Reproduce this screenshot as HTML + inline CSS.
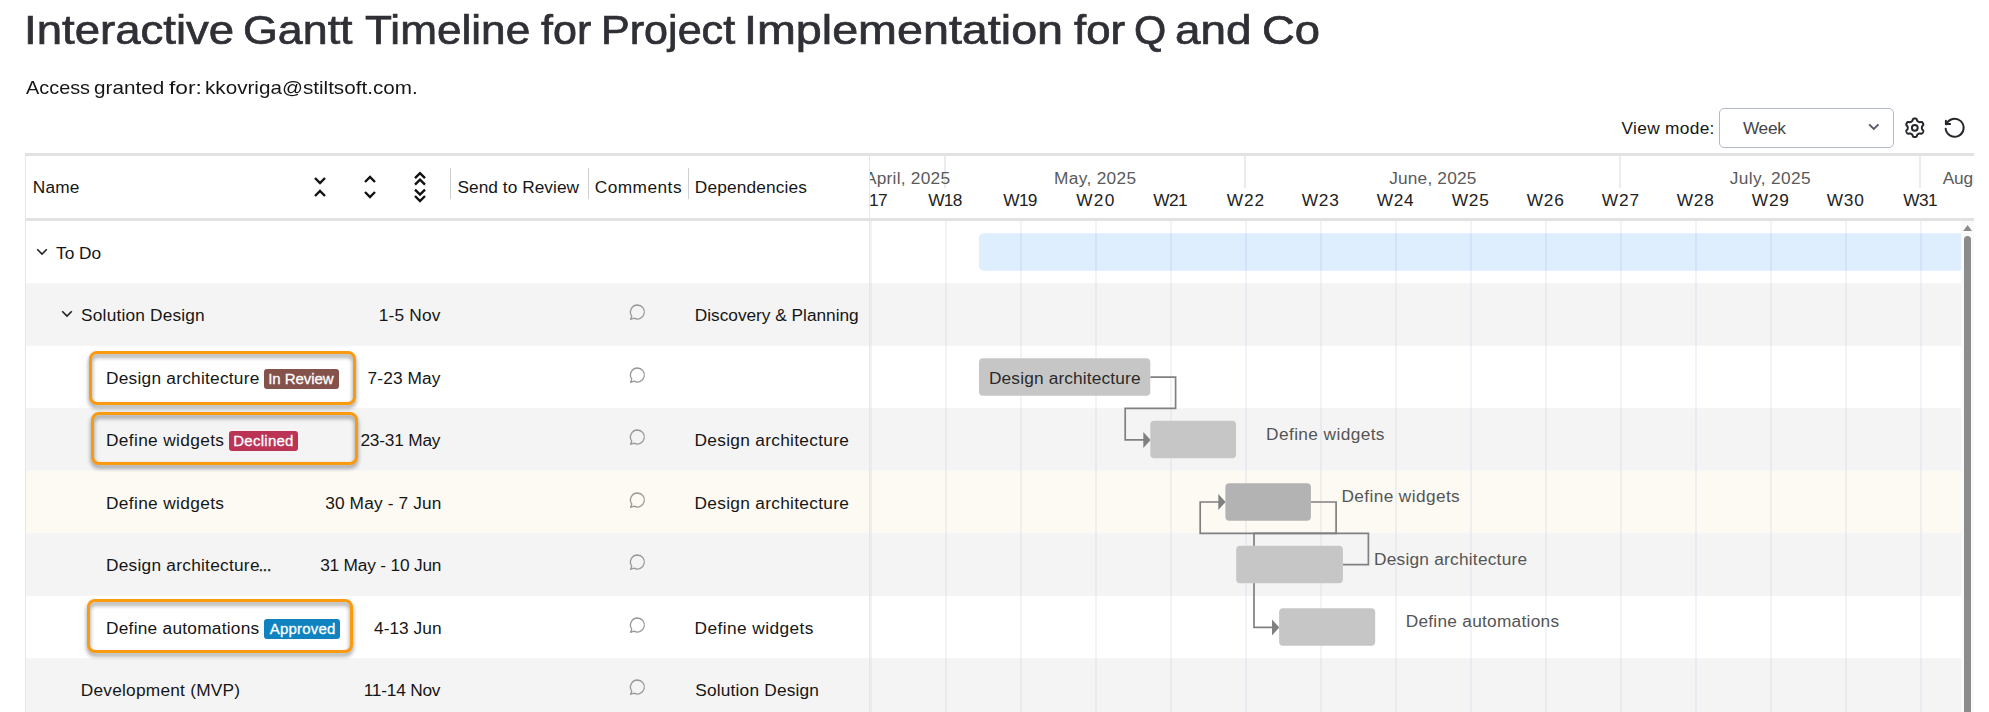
<!DOCTYPE html>
<html lang="en"><head><meta charset="utf-8">
<title>Interactive Gantt Timeline for Project Implementation for Q and Co</title>
<style>
*{box-sizing:border-box;margin:0;padding:0}
html,body{width:1989px;height:712px;overflow:hidden;background:#fff}
body{position:relative;font-family:"Liberation Sans",sans-serif;color:#1c1c1c}
.t{position:absolute;white-space:pre;display:block}
.abs{position:absolute}
.row{position:absolute;left:26px;width:1935px}
.gl{position:absolute;top:221px;width:2px;height:491px;background:rgba(200,212,225,.28)}
.bar{position:absolute;height:37px;border-radius:4px;background:#c6c6c6}
.hl{position:absolute;border:3px solid #fa9a0f;border-radius:8px;filter:drop-shadow(0 3.4px 2.1px rgba(0,0,0,.46))}
.badge{position:absolute;height:19.5px;border-radius:3px}
svg{position:absolute;overflow:visible}
</style></head><body>

<h1 style="font-weight:400"><span class="t" style="left:23.79px;top:4.93px;font-size:40.6px;line-height:50px;color:#2f3036;transform:scaleX(1.1225);transform-origin:0 0;-webkit-text-stroke:0.7px #2f3036;">Interactive</span> <span class="t" style="left:243.13px;top:4.93px;font-size:40.6px;line-height:50px;color:#2f3036;transform:scaleX(1.1038);transform-origin:0 0;-webkit-text-stroke:0.7px #2f3036;">Gantt</span> <span class="t" style="left:364.79px;top:4.93px;font-size:40.6px;line-height:50px;color:#2f3036;transform:scaleX(1.0880);transform-origin:0 0;-webkit-text-stroke:0.7px #2f3036;">Timeline</span> <span class="t" style="left:540.86px;top:4.93px;font-size:40.6px;line-height:50px;color:#2f3036;transform:scaleX(1.0612);transform-origin:0 0;-webkit-text-stroke:0.7px #2f3036;">for</span> <span class="t" style="left:601.03px;top:4.93px;font-size:40.6px;line-height:50px;color:#2f3036;transform:scaleX(1.0621);transform-origin:0 0;-webkit-text-stroke:0.7px #2f3036;">Project</span> <span class="t" style="left:744.39px;top:4.93px;font-size:40.6px;line-height:50px;color:#2f3036;transform:scaleX(1.1500);transform-origin:0 0;-webkit-text-stroke:0.7px #2f3036;">Implementation</span> <span class="t" style="left:1073.96px;top:4.93px;font-size:40.6px;line-height:50px;color:#2f3036;transform:scaleX(1.0783);transform-origin:0 0;-webkit-text-stroke:0.7px #2f3036;">for</span> <span class="t" style="left:1134.39px;top:4.93px;font-size:40.6px;line-height:50px;color:#2f3036;transform:scaleX(1.0206);transform-origin:0 0;-webkit-text-stroke:0.7px #2f3036;">Q</span> <span class="t" style="left:1174.65px;top:4.93px;font-size:40.6px;line-height:50px;color:#2f3036;transform:scaleX(1.1295);transform-origin:0 0;-webkit-text-stroke:0.7px #2f3036;">and</span> <span class="t" style="left:1261.79px;top:4.93px;font-size:40.6px;line-height:50px;color:#2f3036;transform:scaleX(1.1181);transform-origin:0 0;-webkit-text-stroke:0.7px #2f3036;">Co</span></h1>
<p><span class="t" style="left:25.56px;top:76.42px;font-size:19px;line-height:24px;color:#161616;transform:scaleX(1.0460);transform-origin:0 0;">Access</span> <span class="t" style="left:93.93px;top:76.42px;font-size:19px;line-height:24px;color:#161616;transform:scaleX(1.0894);transform-origin:0 0;">granted</span> <span class="t" style="left:169.48px;top:76.42px;font-size:19px;line-height:24px;color:#161616;transform:scaleX(1.1946);transform-origin:0 0;">for:</span> <span class="t" style="left:204.71px;top:76.42px;font-size:19px;line-height:24px;color:#161616;transform:scaleX(1.0872);transform-origin:0 0;">kkovriga@stiltsoft.com.</span></p>
<span class="t" style="left:1621.52px;top:116.01px;font-size:17.3px;line-height:24px;color:#161616;letter-spacing:0.320px;">View mode:</span>
<div class="abs" style="left:1719px;top:108px;width:175px;height:40px;border:1px solid #b3b8cf;border-radius:5px;background:#fff"></div>
<span class="t" style="left:1742.92px;top:116.01px;font-size:17.3px;line-height:24px;color:#444;letter-spacing:-0.286px;">Week</span>
<svg style="left:1866px;top:120px" width="16" height="14" viewBox="0 0 16 14"><path d="M3.1 4.3 L7.8 9 L12.5 4.3" fill="none" stroke="#5a5868" stroke-width="1.9"/></svg>
<svg style="left:0;top:0" width="1989" height="160" viewBox="0 0 1989 160" fill="none" stroke="#25272d" stroke-width="2" stroke-linejoin="round" stroke-linecap="round"><path d="M1921.90 127.80 L1921.90 127.55 L1921.90 127.30 L1921.91 127.05 L1921.94 126.80 L1922.02 126.53 L1922.21 126.23 L1922.53 125.87 L1922.91 125.47 L1923.20 125.07 L1923.32 124.70 L1923.32 124.36 L1923.25 124.04 L1923.14 123.73 L1923.01 123.44 L1922.85 123.15 L1922.68 122.87 L1922.50 122.61 L1922.29 122.36 L1922.05 122.14 L1921.75 121.97 L1921.36 121.89 L1920.87 121.94 L1920.33 122.07 L1919.87 122.17 L1919.51 122.18 L1919.24 122.12 L1919.00 122.02 L1918.78 121.90 L1918.56 121.78 L1918.35 121.65 L1918.13 121.53 L1917.92 121.40 L1917.71 121.27 L1917.50 121.12 L1917.31 120.91 L1917.14 120.60 L1917.00 120.14 L1916.84 119.62 L1916.64 119.17 L1916.37 118.87 L1916.08 118.70 L1915.77 118.60 L1915.45 118.54 L1915.12 118.51 L1914.80 118.50 L1914.48 118.51 L1914.15 118.54 L1913.83 118.60 L1913.52 118.70 L1913.23 118.87 L1912.96 119.17 L1912.76 119.62 L1912.60 120.14 L1912.46 120.60 L1912.29 120.91 L1912.10 121.12 L1911.89 121.27 L1911.68 121.40 L1911.47 121.53 L1911.25 121.65 L1911.04 121.78 L1910.82 121.90 L1910.60 122.02 L1910.36 122.12 L1910.09 122.18 L1909.73 122.17 L1909.27 122.07 L1908.73 121.94 L1908.24 121.89 L1907.85 121.97 L1907.55 122.14 L1907.31 122.36 L1907.10 122.61 L1906.92 122.87 L1906.75 123.15 L1906.59 123.44 L1906.46 123.73 L1906.35 124.04 L1906.28 124.36 L1906.28 124.70 L1906.40 125.07 L1906.69 125.47 L1907.07 125.87 L1907.39 126.23 L1907.58 126.53 L1907.66 126.80 L1907.69 127.05 L1907.70 127.30 L1907.70 127.55 L1907.70 127.80 L1907.70 128.05 L1907.70 128.30 L1907.69 128.55 L1907.66 128.80 L1907.58 129.07 L1907.39 129.37 L1907.07 129.73 L1906.69 130.13 L1906.40 130.53 L1906.28 130.90 L1906.28 131.24 L1906.35 131.56 L1906.46 131.87 L1906.59 132.16 L1906.75 132.45 L1906.92 132.73 L1907.10 132.99 L1907.31 133.24 L1907.55 133.46 L1907.85 133.63 L1908.24 133.71 L1908.73 133.66 L1909.27 133.53 L1909.73 133.43 L1910.09 133.42 L1910.36 133.48 L1910.60 133.58 L1910.82 133.70 L1911.04 133.82 L1911.25 133.95 L1911.47 134.07 L1911.68 134.20 L1911.89 134.33 L1912.10 134.48 L1912.29 134.69 L1912.46 135.00 L1912.60 135.46 L1912.76 135.98 L1912.96 136.43 L1913.23 136.73 L1913.52 136.90 L1913.83 137.00 L1914.15 137.06 L1914.48 137.09 L1914.80 137.10 L1915.12 137.09 L1915.45 137.06 L1915.77 137.00 L1916.08 136.90 L1916.37 136.73 L1916.64 136.43 L1916.84 135.98 L1917.00 135.46 L1917.14 135.00 L1917.31 134.69 L1917.50 134.48 L1917.71 134.33 L1917.92 134.20 L1918.13 134.07 L1918.35 133.95 L1918.56 133.82 L1918.78 133.70 L1919.00 133.58 L1919.24 133.48 L1919.51 133.42 L1919.87 133.43 L1920.33 133.53 L1920.87 133.66 L1921.36 133.71 L1921.75 133.63 L1922.05 133.46 L1922.29 133.24 L1922.50 132.99 L1922.68 132.73 L1922.85 132.45 L1923.01 132.16 L1923.14 131.87 L1923.25 131.56 L1923.32 131.24 L1923.32 130.90 L1923.20 130.53 L1922.91 130.13 L1922.53 129.73 L1922.21 129.37 L1922.02 129.07 L1921.94 128.80 L1921.91 128.55 L1921.90 128.30 L1921.90 128.05Z"/><circle cx="1914.8" cy="127.8" r="2.900"/><path d="M1945.650 128.640 A9 9 0 1 0 1946.290 124.260 L1945.900 124.100"/><path d="M1945.900 120.800 V124.100 H1950.100"/></svg>
<div class="abs" style="left:25px;top:153px;width:1949px;height:3px;background:#e2e2e2"></div>
<div class="abs" style="left:25px;top:218px;width:1949px;height:3px;background:#e2e2e2"></div>
<svg style="left:0;top:0" width="1989" height="712" viewBox="0 0 1989 712"><rect x="26" y="283.25" width="1935" height="62.5" fill="#f4f4f4"/><rect x="26" y="408.25" width="1935" height="62.5" fill="#f4f4f4"/><rect x="26" y="470.75" width="1935" height="62.5" fill="#fcfaf2"/><rect x="26" y="533.25" width="1935" height="62.5" fill="#f4f4f4"/><rect x="26" y="658.25" width="1935" height="62.5" fill="#f4f4f4"/></svg>
<div class="abs" style="left:25px;top:156px;width:1px;height:556px;background:#e6e6e6"></div>
<div class="gl" style="left:945px"></div>
<div class="gl" style="left:1020px"></div>
<div class="gl" style="left:1095px"></div>
<div class="gl" style="left:1170px"></div>
<div class="gl" style="left:1245px"></div>
<div class="gl" style="left:1320px"></div>
<div class="gl" style="left:1395px"></div>
<div class="gl" style="left:1470px"></div>
<div class="gl" style="left:1545px"></div>
<div class="gl" style="left:1620px"></div>
<div class="gl" style="left:1695px"></div>
<div class="gl" style="left:1770px"></div>
<div class="gl" style="left:1845px"></div>
<div class="gl" style="left:1920px"></div>
<div class="abs" style="left:944px;top:156px;width:2px;height:32px;background:#ececee"></div>
<div class="abs" style="left:1244px;top:156px;width:2px;height:32px;background:#ececee"></div>
<div class="abs" style="left:1619px;top:156px;width:2px;height:32px;background:#ececee"></div>
<div class="abs" style="left:1919px;top:156px;width:2px;height:32px;background:#ececee"></div>
<span class="t" style="left:32.78px;top:175.01px;font-size:17.3px;line-height:24px;color:#161616;letter-spacing:0.180px;">Name</span>
<span class="t" style="left:457.41px;top:175.01px;font-size:17.3px;line-height:24px;color:#161616;letter-spacing:0.044px;">Send to Review</span>
<span class="t" style="left:594.72px;top:175.01px;font-size:17.3px;line-height:24px;color:#161616;letter-spacing:0.466px;">Comments</span>
<span class="t" style="left:694.78px;top:175.01px;font-size:17.3px;line-height:24px;color:#161616;letter-spacing:0.148px;">Dependencies</span>
<div class="abs" style="left:450px;top:168px;width:1px;height:31px;background:#cfcfcf"></div>
<div class="abs" style="left:588px;top:168px;width:1px;height:31px;background:#cfcfcf"></div>
<div class="abs" style="left:688px;top:168px;width:1px;height:31px;background:#cfcfcf"></div>
<svg style="left:310px;top:170px" width="20" height="34" viewBox="0 0 20 34" fill="none" stroke="#111" stroke-width="2.4">
<path d="M5 8 L10 13 L15 8"/><path d="M5 26 L10 21 L15 26"/></svg>
<svg style="left:360px;top:170px" width="20" height="34" viewBox="0 0 20 34" fill="none" stroke="#111" stroke-width="2.4">
<path d="M5 12 L10 7 L15 12"/><path d="M5 22 L10 27 L15 22"/></svg>
<svg style="left:410px;top:170px" width="20" height="34" viewBox="0 0 20 34" fill="none" stroke="#111" stroke-width="2.4">
<path d="M5 8.2 L10 3.2 L15 8.2"/><path d="M5 14.6 L10 9.600 L15 14.6"/><path d="M5 19.600 L10 24.6 L15 19.600"/><path d="M5 26 L10 31 L15 26"/></svg>
<div class="abs" style="left:870px;top:156px;width:1104px;height:62px;overflow:hidden">
<span class="t" style="left:-5.03px;top:10.01px;font-size:17.3px;line-height:24px;color:#5a5a5a;letter-spacing:0.245px;">April, 2025</span>
<span class="t" style="left:184.08px;top:10.01px;font-size:17.3px;line-height:24px;color:#5a5a5a;letter-spacing:0.318px;">May, 2025</span>
<span class="t" style="left:519.23px;top:10.01px;font-size:17.3px;line-height:24px;color:#5a5a5a;letter-spacing:0.176px;">June, 2025</span>
<span class="t" style="left:859.73px;top:10.01px;font-size:17.3px;line-height:24px;color:#5a5a5a;letter-spacing:0.380px;">July, 2025</span>
<span class="t" style="left:1072.67px;top:10.01px;font-size:17.3px;line-height:24px;color:#5a5a5a;letter-spacing:-0.173px;">August, 2025</span>
<span class="t" style="left:-16.78px;top:32.01px;font-size:17.3px;line-height:24px;color:#222;letter-spacing:-0.613px;">W17</span>
<span class="t" style="left:58.22px;top:32.01px;font-size:17.3px;line-height:24px;color:#222;letter-spacing:-0.672px;">W18</span>
<span class="t" style="left:133.22px;top:32.01px;font-size:17.3px;line-height:24px;color:#222;letter-spacing:-0.638px;">W19</span>
<span class="t" style="left:206.22px;top:32.01px;font-size:17.3px;line-height:24px;color:#222;letter-spacing:1.290px;">W20</span>
<span class="t" style="left:283.22px;top:32.01px;font-size:17.3px;line-height:24px;color:#222;letter-spacing:-0.626px;">W21</span>
<span class="t" style="left:356.72px;top:32.01px;font-size:17.3px;line-height:24px;color:#222;letter-spacing:0.887px;">W22</span>
<span class="t" style="left:431.72px;top:32.01px;font-size:17.3px;line-height:24px;color:#222;letter-spacing:0.832px;">W23</span>
<span class="t" style="left:506.72px;top:32.01px;font-size:17.3px;line-height:24px;color:#222;letter-spacing:0.706px;">W24</span>
<span class="t" style="left:581.72px;top:32.01px;font-size:17.3px;line-height:24px;color:#222;letter-spacing:0.815px;">W25</span>
<span class="t" style="left:656.72px;top:32.01px;font-size:17.3px;line-height:24px;color:#222;letter-spacing:0.832px;">W26</span>
<span class="t" style="left:731.72px;top:32.01px;font-size:17.3px;line-height:24px;color:#222;letter-spacing:0.887px;">W27</span>
<span class="t" style="left:806.72px;top:32.01px;font-size:17.3px;line-height:24px;color:#222;letter-spacing:0.828px;">W28</span>
<span class="t" style="left:881.72px;top:32.01px;font-size:17.3px;line-height:24px;color:#222;letter-spacing:0.862px;">W29</span>
<span class="t" style="left:956.72px;top:32.01px;font-size:17.3px;line-height:24px;color:#222;letter-spacing:0.790px;">W30</span>
<span class="t" style="left:1033.22px;top:32.01px;font-size:17.3px;line-height:24px;color:#222;letter-spacing:-0.626px;">W31</span>
</div>
<div class="abs" style="left:869px;top:156px;width:1px;height:556px;background:#e6e6e6"></div>
<div class="gl" style="left:870px"></div>
<svg style="left:36px;top:247.8px" width="12" height="8" viewBox="0 0 12 8"><path d="M1.2 1.2 L6 6 L10.8 1.2" fill="none" stroke="#222" stroke-width="1.6"/></svg>
<span class="t" style="left:56.01px;top:241.01px;font-size:17.3px;line-height:24px;color:#161616;letter-spacing:0.005px;">To Do</span>
<svg style="left:61px;top:310.3px" width="12" height="8" viewBox="0 0 12 8"><path d="M1.2 1.2 L6 6 L10.8 1.2" fill="none" stroke="#222" stroke-width="1.6"/></svg>
<span class="t" style="left:81.11px;top:303.01px;font-size:17.3px;line-height:24px;color:#161616;letter-spacing:0.181px;">Solution Design</span>
<span class="t" style="left:378.78px;top:303.01px;font-size:17.3px;line-height:24px;color:#161616;letter-spacing:0.200px;">1-5 Nov</span>
<span class="t" style="left:694.78px;top:303.01px;font-size:17.3px;line-height:24px;color:#161616;letter-spacing:-0.016px;">Discovery &amp; Planning</span>
<span class="t" style="left:105.98px;top:366.01px;font-size:17.3px;line-height:24px;color:#161616;letter-spacing:0.247px;">Design architecture</span>
<span class="t" style="left:367.61px;top:366.01px;font-size:17.3px;line-height:24px;color:#161616;letter-spacing:0.115px;">7-23 May</span>
<span class="t" style="left:105.98px;top:428.01px;font-size:17.3px;line-height:24px;color:#161616;letter-spacing:0.359px;">Define widgets</span>
<span class="t" style="left:360.43px;top:428.01px;font-size:17.3px;line-height:24px;color:#161616;letter-spacing:-0.204px;">23-31 May</span>
<span class="t" style="left:694.58px;top:428.01px;font-size:17.3px;line-height:24px;color:#161616;letter-spacing:0.302px;">Design architecture</span>
<span class="t" style="left:105.98px;top:491.01px;font-size:17.3px;line-height:24px;color:#161616;letter-spacing:0.359px;">Define widgets</span>
<span class="t" style="left:325.14px;top:491.01px;font-size:17.3px;line-height:24px;color:#161616;letter-spacing:0.158px;">30 May - 7 Jun</span>
<span class="t" style="left:694.58px;top:491.01px;font-size:17.3px;line-height:24px;color:#161616;letter-spacing:0.302px;">Design architecture</span>
<span class="t" style="left:105.98px;top:553.01px;font-size:17.3px;line-height:24px;color:#161616;letter-spacing:0.258px;">Design architecture</span>
<span class="t" style="left:258.42px;top:553.01px;font-size:17.3px;line-height:24px;color:#161616;letter-spacing:-0.680px;-webkit-text-stroke:0.25px #161616;">...</span>
<span class="t" style="left:320.14px;top:553.01px;font-size:17.3px;line-height:24px;color:#161616;letter-spacing:-0.183px;">31 May - 10 Jun</span>
<span class="t" style="left:105.98px;top:616.01px;font-size:17.3px;line-height:24px;color:#161616;letter-spacing:0.258px;">Define automations</span>
<span class="t" style="left:374.00px;top:616.01px;font-size:17.3px;line-height:24px;color:#161616;letter-spacing:0.042px;">4-13 Jun</span>
<span class="t" style="left:694.58px;top:616.01px;font-size:17.3px;line-height:24px;color:#161616;letter-spacing:0.428px;">Define widgets</span>
<span class="t" style="left:80.78px;top:678.01px;font-size:17.3px;line-height:24px;color:#161616;letter-spacing:0.233px;">Development (MVP)</span>
<span class="t" style="left:363.68px;top:678.01px;font-size:17.3px;line-height:24px;color:#161616;letter-spacing:-0.207px;">11-14 Nov</span>
<span class="t" style="left:695.21px;top:678.01px;font-size:17.3px;line-height:24px;color:#161616;letter-spacing:0.195px;">Solution Design</span>
<svg style="left:628px;top:303.2px" width="18" height="18" viewBox="0 0 18 18" fill="none" stroke="#9a9a9a" stroke-width="1.3" stroke-linejoin="round"><path d="M9.4 2 a7 7 0 1 1 -3.300 13.200 l-3.600 1.200 1.300 -3.300 A7 7 0 0 1 9.400 2z"/></svg>
<svg style="left:628px;top:366.2px" width="18" height="18" viewBox="0 0 18 18" fill="none" stroke="#9a9a9a" stroke-width="1.3" stroke-linejoin="round"><path d="M9.4 2 a7 7 0 1 1 -3.300 13.200 l-3.600 1.200 1.300 -3.300 A7 7 0 0 1 9.400 2z"/></svg>
<svg style="left:628px;top:428.2px" width="18" height="18" viewBox="0 0 18 18" fill="none" stroke="#9a9a9a" stroke-width="1.3" stroke-linejoin="round"><path d="M9.4 2 a7 7 0 1 1 -3.300 13.200 l-3.600 1.200 1.300 -3.300 A7 7 0 0 1 9.400 2z"/></svg>
<svg style="left:628px;top:491.2px" width="18" height="18" viewBox="0 0 18 18" fill="none" stroke="#9a9a9a" stroke-width="1.3" stroke-linejoin="round"><path d="M9.4 2 a7 7 0 1 1 -3.300 13.200 l-3.600 1.200 1.300 -3.300 A7 7 0 0 1 9.400 2z"/></svg>
<svg style="left:628px;top:553.2px" width="18" height="18" viewBox="0 0 18 18" fill="none" stroke="#9a9a9a" stroke-width="1.3" stroke-linejoin="round"><path d="M9.4 2 a7 7 0 1 1 -3.300 13.200 l-3.600 1.200 1.300 -3.300 A7 7 0 0 1 9.400 2z"/></svg>
<svg style="left:628px;top:616.2px" width="18" height="18" viewBox="0 0 18 18" fill="none" stroke="#9a9a9a" stroke-width="1.3" stroke-linejoin="round"><path d="M9.4 2 a7 7 0 1 1 -3.300 13.200 l-3.600 1.200 1.300 -3.300 A7 7 0 0 1 9.400 2z"/></svg>
<svg style="left:628px;top:678.2px" width="18" height="18" viewBox="0 0 18 18" fill="none" stroke="#9a9a9a" stroke-width="1.3" stroke-linejoin="round"><path d="M9.4 2 a7 7 0 1 1 -3.300 13.200 l-3.600 1.200 1.300 -3.300 A7 7 0 0 1 9.400 2z"/></svg>
<div class="badge" style="left:264.1px;top:369.2px;width:75.0px;background:#84524a"></div><span class="t" style="left:268.22px;top:366.70px;font-size:15px;line-height:24px;color:#fff;letter-spacing:-0.064px;-webkit-text-stroke:0.3px #fff;">In Review</span>
<div class="badge" style="left:229px;top:431px;width:69px;background:#bb3355"></div><span class="t" style="left:233.27px;top:428.50px;font-size:15px;line-height:24px;color:#fff;letter-spacing:0.261px;-webkit-text-stroke:0.3px #fff;">Declined</span>
<div class="badge" style="left:264.2px;top:619.2px;width:75.80000000000001px;background:#0e83c0"></div><span class="t" style="left:269.67px;top:616.70px;font-size:15px;line-height:24px;color:#fff;letter-spacing:0.226px;-webkit-text-stroke:0.3px #fff;">Approved</span>
<div class="hl" style="left:89px;top:351px;width:266.5px;height:54px"></div>
<div class="hl" style="left:91px;top:412.3px;width:266.5px;height:52.6px"></div>
<div class="hl" style="left:87px;top:599px;width:266px;height:53.6px"></div>
<svg style="left:0;top:0" width="1989" height="712" viewBox="0 0 1989 712">
<g fill="none" stroke="#808080" stroke-width="1.7">
<path d="M1150.3 377.100 H1175.600 V408.400 H1125.2 V439.900 H1144"/>
<path d="M1342.9 564.600 H1368.4 V533.400 H1200.200 V502 H1219"/>
<path d="M1310.900 502 H1336.100 V533.400 H1254 V627.400 H1273"/>
</g>
<g fill="#808080">
<path d="M1143.300 431.900 L1150.600 439.900 L1143.300 447.900z"/>
<path d="M1218.300 494 L1225.600 502 L1218.300 510z"/>
<path d="M1272 619.400 L1279.300 627.400 L1272 635.400z"/>
</g>
<path d="M983.500 233.250 H1961 V270.750 H983.500 a4.500 4.500 0 0 1 -4.500 -4.500 V237.750 a4.500 4.500 0 0 1 4.500 -4.500z" fill="rgba(0,122,255,.13)"/>
<g fill="#c6c6c6">
<rect x="979" y="358.250" width="171.300" height="37.500" rx="4"/>
<rect x="1150.300" y="420.750" width="85.700" height="37.500" rx="4"/>
<rect x="1225.400" y="483.250" width="85.500" height="37.500" rx="4" fill="#b3b3b3"/>
<rect x="1236.200" y="545.750" width="106.700" height="37.500" rx="4"/>
<rect x="1279.100" y="608.250" width="96.100" height="37.500" rx="4"/>
</g>
</svg>
<span class="t" style="left:988.98px;top:366.01px;font-size:17.3px;line-height:24px;color:#2a2a2a;letter-spacing:0.152px;">Design architecture</span>
<span class="t" style="left:1266.08px;top:422.01px;font-size:17.3px;line-height:24px;color:#555;letter-spacing:0.390px;">Define widgets</span>
<span class="t" style="left:1341.48px;top:484.01px;font-size:17.3px;line-height:24px;color:#555;letter-spacing:0.375px;">Define widgets</span>
<span class="t" style="left:1373.98px;top:547.01px;font-size:17.3px;line-height:24px;color:#555;letter-spacing:0.236px;">Design architecture</span>
<span class="t" style="left:1405.68px;top:609.01px;font-size:17.3px;line-height:24px;color:#555;letter-spacing:0.264px;">Define automations</span>
<div class="abs" style="left:1961px;top:221px;width:13px;height:491px;background:#fafafa"></div>
<svg style="left:1961px;top:221px" width="13" height="14" viewBox="0 0 13 14"><path d="M2.2 10 L6.600 3.900 L11 10z" fill="#8a8a8a"/></svg>
<div class="abs" style="left:1964px;top:236px;width:7px;height:500px;border-radius:3.5px;background:#8c8c8c"></div>
</body></html>
